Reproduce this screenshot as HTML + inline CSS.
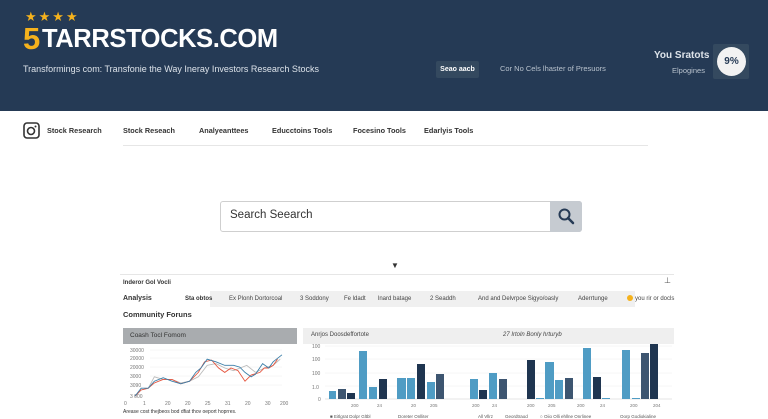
<!DOCTYPE html>
<html><head><meta charset="utf-8"><style>
*{margin:0;padding:0;box-sizing:border-box}
body{width:768px;height:419px;overflow:hidden;background:#fff;font-family:"Liberation Sans",sans-serif;position:relative}
.a{position:absolute;white-space:nowrap}
.hdr{position:absolute;left:0;top:0;width:768px;height:111px;background:#253a55}
.nav{font-size:7.3px;font-weight:bold;color:#333}
</style></head><body>
<div class="hdr"></div>
<div class="a" style="left:25px;top:9px;color:#f5b21d;font-size:13px;letter-spacing:2px">★★★★</div>
<div class="a" style="left:23px;top:24px;font-size:31px;font-weight:bold;color:#f5b21d;line-height:30px">5</div>
<div class="a" style="left:42px;top:26px;font-size:25.5px;font-weight:bold;color:#fff;line-height:27px;letter-spacing:-0.4px">TARRSTOCKS.COM</div>
<div class="a" style="left:23px;top:64px;font-size:9px;color:#dde3ea">Transformings com: Transfonie the Way Ineray Investors Research Stocks</div>
<div class="a" style="left:436px;top:61px;width:43px;height:17px;background:#34495f;border-radius:2px;color:#fff;font-size:7px;font-weight:bold;line-height:17px;text-align:center">Seao aacb</div>
<div class="a" style="left:500px;top:64px;font-size:7.5px;color:#b8c2cd">Cor No Cels lhaster of Presuors</div>
<div class="a" style="left:654px;top:50px;font-size:10px;font-weight:bold;color:#dde3ea">You Sratots</div>
<div class="a" style="left:672px;top:66px;font-size:7.5px;color:#b8c2cd">Elpogines</div>
<div class="a" style="left:713px;top:44px;width:36px;height:35px;background:#34495f;border-radius:2px"></div>
<div class="a" style="left:717px;top:47px;width:29px;height:29px;background:#f2f2f2;border-radius:50%;font-size:10px;font-weight:bold;color:#253a55;line-height:29px;text-align:center">9%</div>

<svg class="a" style="left:23px;top:122px" width="17" height="17" viewBox="0 0 17 17"><rect x="1" y="1" width="15" height="15" rx="3" fill="none" stroke="#333" stroke-width="1.6"/><circle cx="8" cy="9" r="3.5" fill="none" stroke="#333" stroke-width="1.6"/><circle cx="12.5" cy="4.5" r="1" fill="#333"/></svg>
<div class="a nav" style="left:47px;top:126px">Stock Research</div>
<div class="a nav" style="left:123px;top:126px">Stock Reseach</div>
<div class="a nav" style="left:199px;top:126px">Analyeanttees</div>
<div class="a nav" style="left:272px;top:126px">Educctoins Tools</div>
<div class="a nav" style="left:353px;top:126px">Focesino Tools</div>
<div class="a nav" style="left:424px;top:126px">Edarlyis Tools</div>
<div class="a" style="left:123px;top:145px;width:525px;height:1px;background:#e6e6e6"></div>

<div class="a" style="left:220px;top:201px;width:362px;height:31px;border:1px solid #cfcfcf;border-radius:3px"></div>
<div class="a" style="left:550px;top:201px;width:32px;height:31px;background:#c6cbd1;border-radius:0 3px 3px 0"></div>
<svg class="a" style="left:557px;top:207px" width="19" height="19" viewBox="0 0 19 19"><circle cx="7.5" cy="7.5" r="5" fill="none" stroke="#253a55" stroke-width="2"/><line x1="11" y1="11" x2="16" y2="16" stroke="#253a55" stroke-width="2.5" stroke-linecap="round"/></svg>
<div class="a" style="left:230px;top:209px;font-size:11.5px;color:#333">Search Seearch</div>
<div class="a" style="left:391px;top:261px;font-size:8px;color:#333">▼</div>

<div class="a" style="left:120px;top:274px;width:554px;height:1px;background:#e6e6e6"></div>
<div class="a" style="left:123px;top:280px;font-size:6px;font-weight:bold;color:#333">Inderor Gol Vocli</div>
<div class="a" style="left:664px;top:276px;font-size:8px;color:#555">⊥</div>
<div class="a" style="left:210px;top:291px;width:425px;height:16px;background:#f0f0f0"></div>
<div class="a" style="left:123px;top:295px;font-size:7px;font-weight:bold;color:#333">Analysis</div>
<div class="a" style="left:185px;top:296px;font-size:6px;font-weight:bold;color:#333">Sta obtos</div>
<div class="a" style="left:229px;top:296px;font-size:6px;color:#444">Ex Plonh Dortorcoal</div>
<div class="a" style="left:300px;top:296px;font-size:6px;color:#444">3 Soddony</div>
<div class="a" style="left:344px;top:296px;font-size:6px;color:#444">Fe ldadt</div>
<div class="a" style="left:378px;top:296px;font-size:6px;color:#444">lnard batage</div>
<div class="a" style="left:430px;top:296px;font-size:6px;color:#444">2 Seaddh</div>
<div class="a" style="left:478px;top:296px;font-size:6px;color:#444">And and Delvrpoe Sigyo/oasly</div>
<div class="a" style="left:578px;top:296px;font-size:6px;color:#444">Aderrtunge</div>
<div class="a" style="left:627px;top:295px;width:6px;height:6px;border-radius:50%;background:#f5b21d"></div>
<div class="a" style="left:635px;top:296px;font-size:6px;color:#444">you rir or docls</div>
<div class="a" style="left:123px;top:310px;font-size:7.5px;font-weight:bold;color:#333">Community Foruns</div>

<div class="a" style="left:123px;top:328px;width:174px;height:16px;background:#a9acaf"></div>
<div class="a" style="left:130px;top:332px;font-size:6.5px;color:#333">Coash Tocl Fomom</div>
<div class="a" style="left:303px;top:328px;width:371px;height:16px;background:#efefef"></div>
<div class="a" style="left:311px;top:332px;font-size:6px;color:#444">Anrjos Doosdeffortote</div>
<div class="a" style="left:503px;top:332px;font-size:6px;color:#444;font-style:italic">27 Irtoln Bonly hrturyb</div>

<svg class="a" style="left:110px;top:344px" width="190" height="75" viewBox="0 0 190 75">
<g font-size="5" fill="#777" font-family="Liberation Sans"><text x="20" y="8">30000</text><text x="20" y="16">20000</text><text x="20" y="25">20000</text><text x="20" y="34">3000</text><text x="20" y="43">3090</text><text x="20" y="54">3 000</text>
<text x="14" y="61">0</text><text x="33" y="61">1</text><text x="55" y="61">20</text><text x="75" y="61">20</text><text x="95" y="61">25</text><text x="115" y="61">31</text><text x="135" y="61">20</text><text x="155" y="61">30</text><text x="170" y="61">200</text></g>
<g stroke="#eee" stroke-width=".5"><line x1="40" y1="6" x2="172" y2="6"/><line x1="40" y1="14" x2="172" y2="14"/><line x1="40" y1="23" x2="172" y2="23"/><line x1="40" y1="32" x2="172" y2="32"/><line x1="40" y1="41" x2="172" y2="41"/></g>
<g transform="translate(25,2) scale(0.88,0.88) translate(-13,0)">
<polyline fill="none" stroke="#bbb" stroke-width="1" points="13,57 20,50 28,48 35,35 45,38 55,38 65,42 75,40 85,35 95,22 105,20 115,25 125,28 140,22 150,30 160,25 170,22 178,15"/>
<polyline fill="none" stroke="#e5533c" stroke-width="1" points="13,57 20,50 28,48 35,42 45,38 55,38 65,43 75,40 85,30 92,18 100,16 108,25 115,30 122,25 130,28 138,40 145,33 155,30 160,25 165,25 170,22 175,15"/>
<polyline fill="none" stroke="#3a7ea8" stroke-width="1" points="13,57 20,48 28,48 35,40 45,36 55,40 65,43 75,40 82,30 88,25 95,15 105,18 115,22 125,22 132,24 138,30 145,35 150,32 158,20 165,25 170,18 180,10"/>
</g>
</svg>
<div class="a" style="left:123px;top:409px;font-size:5px;color:#333">Arease cost thejbeos bod dfiat thov oeport hoprres.</div>

<svg class="a" style="left:300px;top:344px" width="380" height="75" viewBox="300 344 380 75">
<g font-size="5" fill="#777" font-family="Liberation Sans"><text x="312" y="348">100</text><text x="312" y="361">100</text><text x="312" y="375">100</text><text x="312" y="389">1.0</text><text x="318" y="401">0</text></g>
<g stroke="#eee" stroke-width=".5"><line x1="325" y1="346" x2="672" y2="346"/><line x1="325" y1="359" x2="672" y2="359"/><line x1="325" y1="373" x2="672" y2="373"/><line x1="325" y1="386" x2="672" y2="386"/></g>
<line x1="325" y1="399" x2="672" y2="399" stroke="#ccc" stroke-width=".5"/>
<g fill="#4f9cc4">
<rect x="329" y="391" width="7" height="8"/><rect x="359" y="351" width="8" height="48"/><rect x="369" y="387" width="8" height="12"/><rect x="397" y="378" width="9" height="21"/><rect x="407" y="378" width="8" height="21"/><rect x="427" y="382" width="8" height="17"/><rect x="470" y="379" width="8" height="20"/><rect x="489" y="373" width="8" height="26"/><rect x="536" y="398" width="8" height="1"/><rect x="545" y="362" width="9" height="37"/><rect x="555" y="380" width="8" height="19"/><rect x="583" y="348" width="8" height="51"/><rect x="602" y="398" width="8" height="1"/><rect x="622" y="350" width="8" height="49"/><rect x="632" y="398" width="8" height="1"/></g>
<g fill="#3d5570"><rect x="338" y="389" width="8" height="10"/><rect x="436" y="374" width="8" height="25"/><rect x="499" y="379" width="8" height="20"/><rect x="565" y="378" width="8" height="21"/><rect x="641" y="353" width="8" height="46"/></g>
<g fill="#1f3550"><rect x="347" y="393" width="8" height="6"/><rect x="379" y="379" width="8" height="20"/><rect x="417" y="364" width="8" height="35"/><rect x="479" y="390" width="8" height="9"/><rect x="527" y="360" width="8" height="39"/><rect x="593" y="377" width="8" height="22"/><rect x="650" y="340" width="8" height="59"/></g>
<g font-size="4.5" fill="#777" font-family="Liberation Sans"><text x="351" y="407">200</text><text x="377" y="407">24</text><text x="411" y="407">20</text><text x="430" y="407">205</text><text x="472" y="407">200</text><text x="492" y="407">24</text><text x="527" y="407">200</text><text x="548" y="407">205</text><text x="577" y="407">200</text><text x="600" y="407">24</text><text x="630" y="407">200</text><text x="653" y="407">204</text></g>
<g font-size="4.5" fill="#555" font-family="Liberation Sans"><text x="330" y="418">■ Eitlgrat Dolpr Gltbl</text><text x="398" y="418">Doreter Onlliter</text><text x="478" y="418">All Vllrz</text><text x="505" y="418">Geordtraod</text><text x="540" y="418">○ Oiio Olli ehllne Onrlinee</text><text x="620" y="418">Oorp Godiokialine</text></g>
</svg>
</body></html>
